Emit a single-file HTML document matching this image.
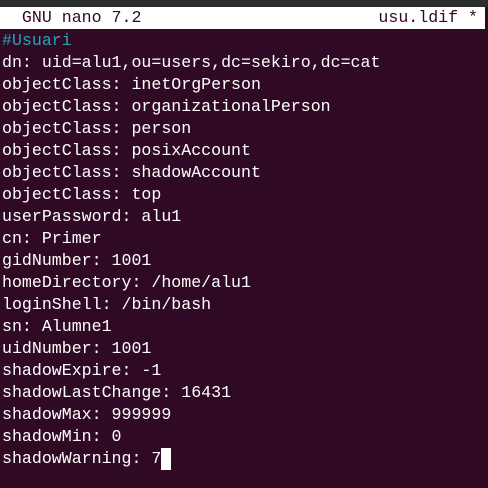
<!DOCTYPE html>
<html><head><style>
html,body{margin:0;padding:0;}
body{width:488px;height:488px;background:#300a24;overflow:hidden;position:relative;font-family:"Liberation Mono","DejaVu Sans Mono",monospace;font-size:16.6px;color:#ffffff;}
.top{position:absolute;left:0;top:0;width:488px;height:7px;background:#2c2c2c;}
.bar{position:absolute;left:2px;top:7px;width:483px;height:22px;background:#ffffff;color:#300a24;line-height:22px;white-space:pre;}
.barbg{position:absolute;left:0;top:7px;width:485px;height:22px;background:#fff;}
.bar .r{position:absolute;right:7px;top:0;}
.txt{position:absolute;left:2px;top:30px;line-height:22px;white-space:pre;}
.c{color:#2aa1b3;}
.cur{display:inline-block;width:10px;height:22px;background:#fff;vertical-align:top;}
</style></head><body>
<div class="top"></div>
<div class="barbg"></div>
<div class="bar">  GNU nano 7.2<span class="r">usu.ldif *</span></div>
<div class="txt"><span class="c">#Usuari</span>
dn: uid=alu1,ou=users,dc=sekiro,dc=cat
objectClass: inetOrgPerson
objectClass: organizationalPerson
objectClass: person
objectClass: posixAccount
objectClass: shadowAccount
objectClass: top
userPassword: alu1
cn: Primer
gidNumber: 1001
homeDirectory: /home/alu1
loginShell: /bin/bash
sn: Alumne1
uidNumber: 1001
shadowExpire: -1
shadowLastChange: 16431
shadowMax: 999999
shadowMin: 0
shadowWarning: 7<span class="cur"></span></div>
</body></html>
